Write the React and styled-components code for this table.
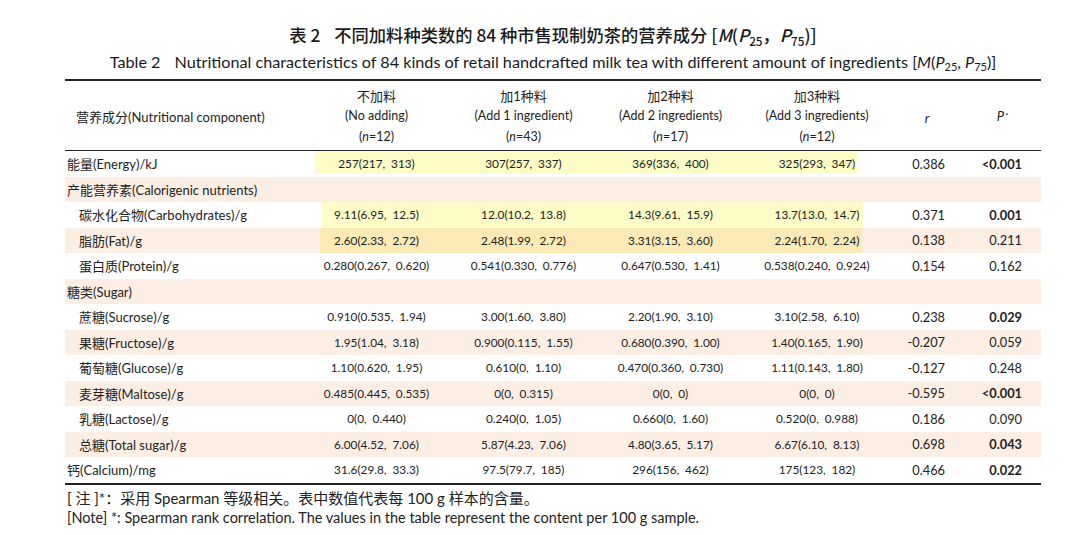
import styled, { createGlobalStyle, css } from 'styled-components';

const GlobalStyle = createGlobalStyle`
  body {
    margin: 0;
    background: #fff;
  }
  sub {
    font-size: 0.68em;
    line-height: 0;
    vertical-align: -0.3em;
  }
`;

const FONT = `Lato, "Noto Sans CJK SC", sans-serif`;
const COLS = '238px 587px 74px 77px';
const GROUP_COLS = '147px 147px 147px 146px';
const BEIGE = '#fdeee3';

const Page = styled.div`
  padding: 24px 0 0 65px;
  font-family: ${FONT};
  color: #222;
`;

const Sheet = styled.div`
  width: 976px;
`;

const Caption = styled.div`
  text-align: center;
`;

const CaptionCn = styled.div`
  font-family: "Noto Sans CJK SC", sans-serif;
  font-size: 17.3px;
  font-weight: 500;
  line-height: 22px;
  color: #1a1a1a;
`;

const CaptionEn = styled.div`
  margin-top: 6px;
  font-size: 16.2px;
  line-height: 20px;
  color: #1a1a1a;
`;

const Gap = styled.span`
  display: inline-block;
  width: ${({ $w }) => $w}px;
`;

const Table = styled.div`
  margin-top: 7px;
  border-top: 2px solid #222;
  border-bottom: 2px solid #222;
`;

const HeadRow = styled.div`
  display: grid;
  grid-template-columns: ${COLS};
  height: 69px;
  border-bottom: 1px solid #222;
  font-size: 12.5px;
`;

const HeadLabel = styled.div`
  display: flex;
  align-items: center;
  padding: 2px 0 0 11px;
  font-size: 13px;
`;

const GroupHead = styled.div`
  display: grid;
  grid-template-columns: ${GROUP_COLS};
`;

const GroupTitle = styled.div`
  display: flex;
  flex-direction: column;
  align-items: center;
  justify-content: center;
  line-height: 20.5px;
  padding-top: 2px;
  span:first-child {
    font-size: 13px;
  }
`;

const HeadSym = styled.div`
  display: flex;
  align-items: center;
  justify-content: center;
  padding-top: ${({ $up }) => ($up ? 0 : 4)}px;
  font-style: italic;
  font-size: 13px;
  sup {
    font-size: 8px;
    margin-left: 1px;
  }
`;

const Row = styled.div`
  display: grid;
  grid-template-columns: ${COLS};
  height: 25.5px;
  background: ${({ $shade }) => ($shade ? BEIGE : '#fff')};
  font-size: 11.8px;
`;

const Label = styled.div`
  display: flex;
  align-items: center;
  padding-left: ${({ $indent }) => ($indent ? 14 : 2)}px;
  font-size: 13px;
  white-space: nowrap;
`;

const ValueBand = styled.div`
  display: grid;
  grid-template-columns: ${GROUP_COLS};
  ${({ $hl }) =>
    $hl &&
    css`
      background-image: linear-gradient(${$hl.color}, ${$hl.color});
      background-repeat: no-repeat;
      background-position: ${$hl.left}px ${$hl.top}px;
      background-size: calc(100% - ${$hl.left + $hl.right}px)
        calc(100% - ${$hl.top + $hl.bottom}px);
    `}
`;

const Value = styled.div`
  display: flex;
  align-items: center;
  justify-content: center;
  white-space: pre;
`;

const Stat = styled.div`
  display: flex;
  align-items: center;
  justify-content: flex-end;
  padding-right: 19px;
  font-size: 12.8px;
  font-weight: ${({ $bold }) => ($bold ? 700 : 400)};
`;

const Notes = styled.div`
  padding: 3px 0 0 2px;
`;

const NoteCn = styled.div`
  font-size: 15px;
  line-height: 20px;
`;

const NoteEn = styled.div`
  font-size: 14.5px;
  line-height: 20px;
`;

const HL = {
  energy: { color: '#fdfbc6', left: 12, right: 33, top: 0, bottom: 3 },
  carbo: { color: '#fdfbc6', left: 19, right: 27, top: 0, bottom: 1 },
  fat: { color: '#fbe9b6', left: 17, right: 28, top: 0, bottom: 0 },
};

const groups = [
  { cn: '不加料', en: '(No adding)', n: 12 },
  { cn: '加1种料', en: '(Add 1 ingredient)', n: 43 },
  { cn: '加2种料', en: '(Add 2 ingredients)', n: 17 },
  { cn: '加3种料', en: '(Add 3 ingredients)', n: 12 },
];

// median(P25, P75) pairs, separator added when rendering
const rows = [
  { label: '能量(Energy)/kJ', values: [['257', '217', '313'], ['307', '257', '337'], ['369', '336', '400'], ['325', '293', '347']], r: '0.386', p: '<0.001', bold: true, hl: 'energy' },
  { label: '产能营养素(Calorigenic nutrients)' },
  { label: '碳水化合物(Carbohydrates)/g', indent: true, values: [['9.11', '6.95', '12.5'], ['12.0', '10.2', '13.8'], ['14.3', '9.61', '15.9'], ['13.7', '13.0', '14.7']], r: '0.371', p: '0.001', bold: true, hl: 'carbo' },
  { label: '脂肪(Fat)/g', indent: true, values: [['2.60', '2.33', '2.72'], ['2.48', '1.99', '2.72'], ['3.31', '3.15', '3.60'], ['2.24', '1.70', '2.24']], r: '0.138', p: '0.211', hl: 'fat' },
  { label: '蛋白质(Protein)/g', indent: true, values: [['0.280', '0.267', '0.620'], ['0.541', '0.330', '0.776'], ['0.647', '0.530', '1.41'], ['0.538', '0.240', '0.924']], r: '0.154', p: '0.162' },
  { label: '糖类(Sugar)' },
  { label: '蔗糖(Sucrose)/g', indent: true, values: [['0.910', '0.535', '1.94'], ['3.00', '1.60', '3.80'], ['2.20', '1.90', '3.10'], ['3.10', '2.58', '6.10']], r: '0.238', p: '0.029', bold: true },
  { label: '果糖(Fructose)/g', indent: true, values: [['1.95', '1.04', '3.18'], ['0.900', '0.115', '1.55'], ['0.680', '0.390', '1.00'], ['1.40', '0.165', '1.90']], r: '-0.207', p: '0.059' },
  { label: '葡萄糖(Glucose)/g', indent: true, values: [['1.10', '0.620', '1.95'], ['0.610', '0', '1.10'], ['0.470', '0.360', '0.730'], ['1.11', '0.143', '1.80']], r: '-0.127', p: '0.248' },
  { label: '麦芽糖(Maltose)/g', indent: true, values: [['0.485', '0.445', '0.535'], ['0', '0', '0.315'], ['0', '0', '0'], ['0', '0', '0']], r: '-0.595', p: '<0.001', bold: true },
  { label: '乳糖(Lactose)/g', indent: true, values: [['0', '0', '0.440'], ['0.240', '0', '1.05'], ['0.660', '0', '1.60'], ['0.520', '0', '0.988']], r: '0.186', p: '0.090' },
  { label: '总糖(Total sugar)/g', indent: true, values: [['6.00', '4.52', '7.06'], ['5.87', '4.23', '7.06'], ['4.80', '3.65', '5.17'], ['6.67', '6.10', '8.13']], r: '0.698', p: '0.043', bold: true },
  { label: '钙(Calcium)/mg', values: [['31.6', '29.8', '33.3'], ['97.5', '79.7', '185'], ['296', '156', '462'], ['175', '123', '182']], r: '0.466', p: '0.022', bold: true },
];

const Quartiles = ({ comma }) => (
  <>
    [<i>M</i>(<i>P</i>
    <sub>25</sub>
    {comma}
    <i>P</i>
    <sub>75</sub>)]
  </>
);

export default function App() {
  return (
    <Page>
      <GlobalStyle />
      <Sheet>
        <Caption>
          <CaptionCn>
            表 2<Gap $w={14} />不同加料种类数的 84 种市售现制奶茶的营养成分 <Quartiles comma="，" />
          </CaptionCn>
          <CaptionEn>
            Table 2<Gap $w={14} />Nutritional characteristics of 84 kinds of retail handcrafted milk
            tea with different amount of ingredients <Quartiles comma=", " />
          </CaptionEn>
        </Caption>

        <Table>
          <HeadRow>
            <HeadLabel>营养成分(Nutritional component)</HeadLabel>
            <GroupHead>
              {groups.map((g) => (
                <GroupTitle key={g.cn}>
                  <span>{g.cn}</span>
                  <span>{g.en}</span>
                  <span>
                    (<i>n</i>={g.n})
                  </span>
                </GroupTitle>
              ))}
            </GroupHead>
            <HeadSym>r</HeadSym>
            <HeadSym $up>
              P<sup>*</sup>
            </HeadSym>
          </HeadRow>

          {rows.map((row, i) => (
            <Row key={row.label} $shade={i % 2 === 1}>
              <Label $indent={row.indent}>{row.label}</Label>
              <ValueBand $hl={HL[row.hl]}>
                {(row.values || []).map(([m, lo, hi], j) => (
                  <Value key={j}>{`${m}(${lo},\u2002${hi})`}</Value>
                ))}
              </ValueBand>
              <Stat>{row.r}</Stat>
              <Stat $bold={row.bold}>{row.p}</Stat>
            </Row>
          ))}
        </Table>

        <Notes>
          <NoteCn>[ 注 ]*：采用 Spearman 等级相关。表中数值代表每 100 g 样本的含量。</NoteCn>
          <NoteEn>
            [Note] *: Spearman rank correlation. The values in the table represent the content per 100 g
            sample.
          </NoteEn>
        </Notes>
      </Sheet>
    </Page>
  );
}
